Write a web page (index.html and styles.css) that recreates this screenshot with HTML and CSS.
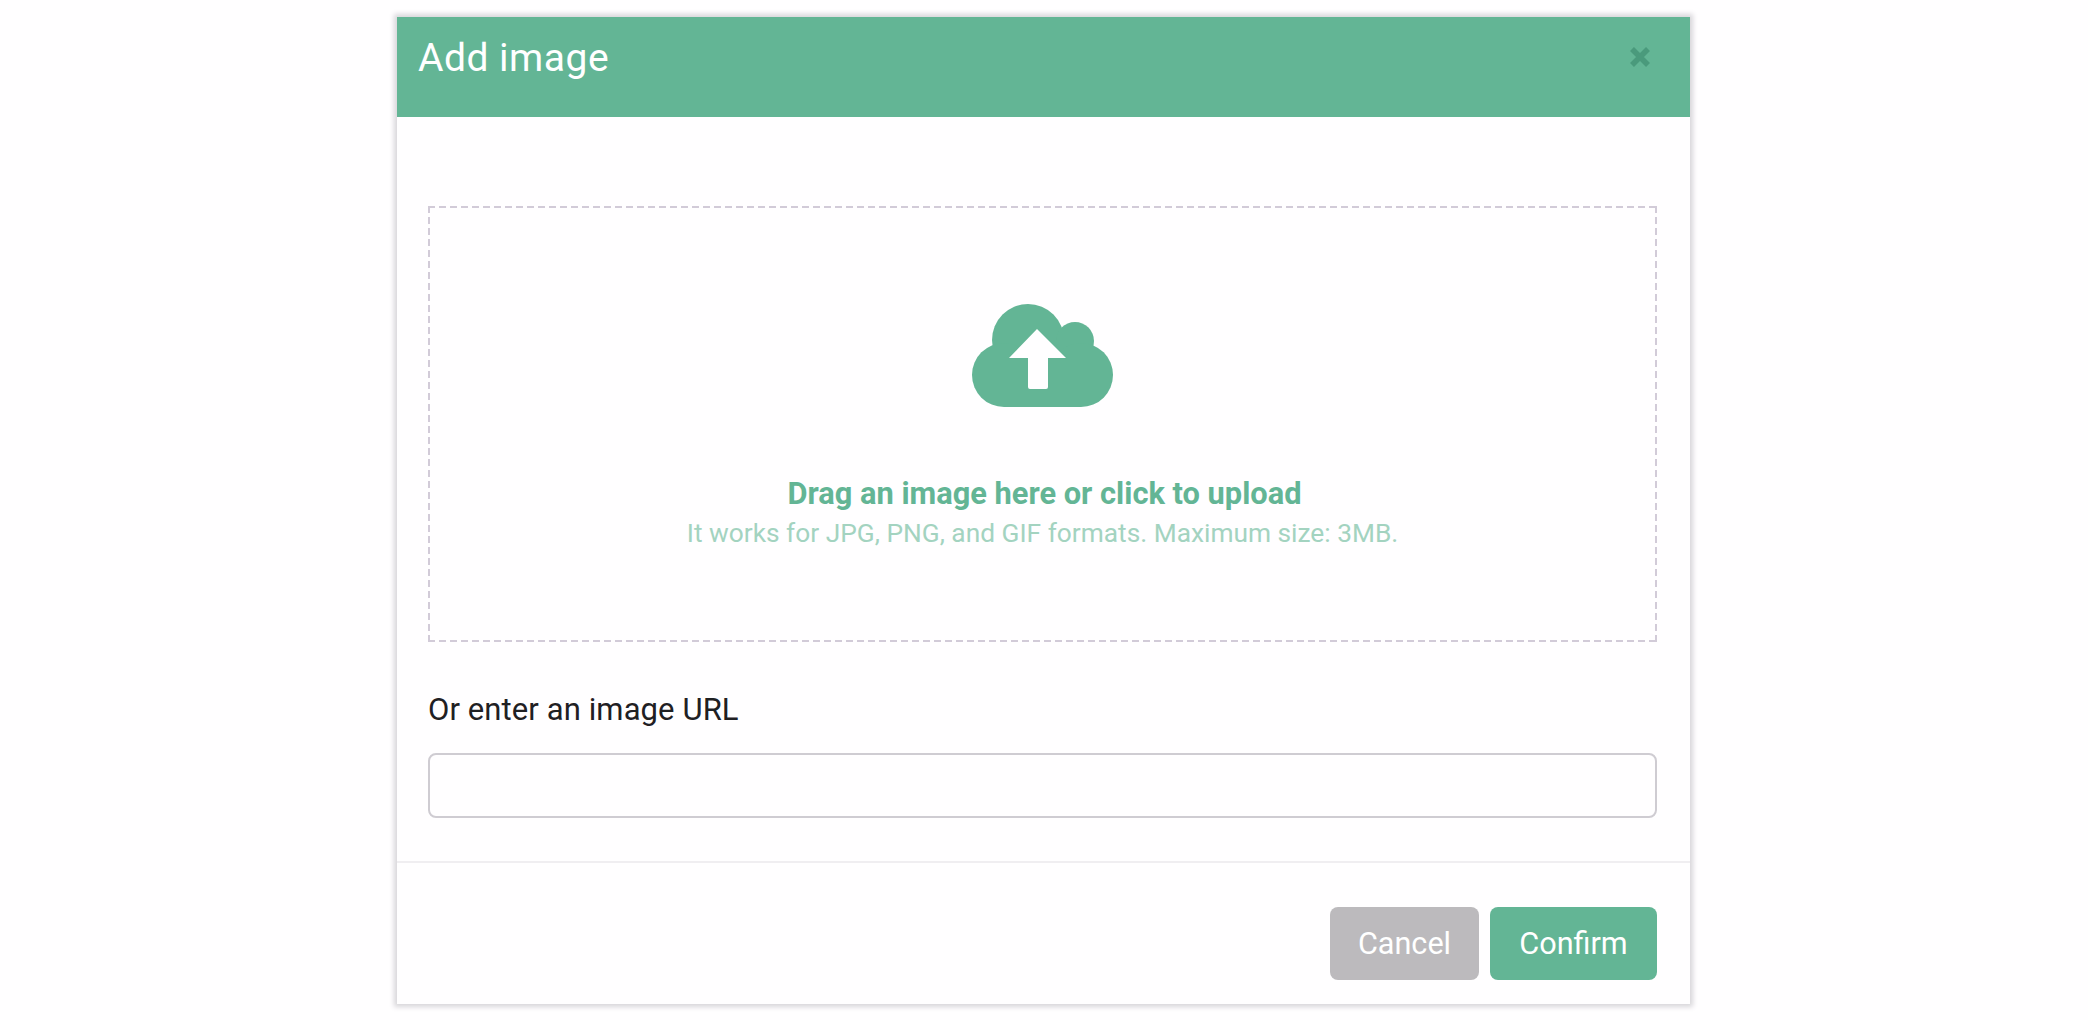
FILE: index.html
```html
<!DOCTYPE html>
<html lang="en">
<head>
  <meta charset="UTF-8" />
  <title>Add image</title>
  <link rel="stylesheet" href="styles.css">
</head>
<body>

  <div class="modal">
    <header class="modal-header">
      <h1>Add image</h1>
      <button class="close" aria-label="Close">
        <svg width="22" height="22" viewBox="0 0 22 22"><path d="M3 3 L19 19 M19 3 L3 19" /></svg>
      </button>
    </header>

    <section class="modal-body">
      <div class="dropzone">
        <svg class="cloud" width="141" height="103" viewBox="22 24 141 103">
          <circle cx="78" cy="60" r="36" />
          <circle cx="125" cy="61" r="19" />
          <circle cx="54" cy="95" r="32" />
          <circle cx="131" cy="95" r="32" />
          <rect x="54" y="70" width="77" height="57" />
          <path class="arrow" d="M87 49 L116 78 L98 78 L98 107 Q98 109 96 109 L80 109 Q78 109 78 107 L78 78 L59 78 Z" />
        </svg>
        <p class="drop-title">Drag an image here or click to upload</p>
        <p class="drop-hint">It works for JPG, PNG, and GIF formats. Maximum size: 3MB.</p>
      </div>

      <label class="url-label" for="url">Or enter an image URL</label>
      <input class="url-input" id="url" type="text">
    </section>

    <footer class="modal-footer">
      <button class="btn btn-cancel">Cancel</button>
      <button class="btn btn-confirm">Confirm</button>
    </footer>
  </div>

</body>
</html>
```

FILE: styles.css
```css
* {
  margin: 0; padding: 0; box-sizing: border-box;
  font-family: Roboto, sans-serif;
}

body {
  background: #fffeff;
  min-height: 100vh;
  padding: 17px 0 0 397px;
}

.modal {
  width: 1293px;
  height: 987px;
  background: #fffeff;
  box-shadow: 0 0 5px 3px #d8d6da;
  display: flex;
  flex-direction: column;
}

.modal-header {
  height: 100px;
  background: #63b595;
  padding: 0 21px;
  display: flex;
  align-items: center;
  justify-content: space-between;
}

.modal-header h1 {
  font-size: 39px;
  font-weight: 400;
  letter-spacing: 0.5px;
  color: #fff;
  margin-top: -18px;
}

.close {
  background: none;
  border: none;
  width: 22px;
  height: 22px;
  margin: -21px 18px 0 0;
}

.close path {
  stroke: #4a9a7c;
  stroke-width: 5.5;
  fill: none;
}

.modal-body {
  padding: 89px 33px 0 31px;
  height: 746px;
  border-bottom: 2px solid #f0eef1;
}

.dropzone {
  height: 436px;
  padding-top: 98px;
  display: flex;
  flex-direction: column;
  align-items: center;
  /* the browser's own dashes are too short here */
  background:
    repeating-linear-gradient(90deg, #d2cbd8 0 7px, transparent 7px 11px) top / 100% 2px no-repeat,
    repeating-linear-gradient(90deg, #d2cbd8 0 7px, transparent 7px 11px) bottom / 100% 2px no-repeat,
    repeating-linear-gradient(0deg, #d2cbd8 0 7px, transparent 7px 11px) left / 2px 100% no-repeat,
    repeating-linear-gradient(0deg, #d2cbd8 0 7px, transparent 7px 11px) right / 2px 100% no-repeat;
}

.cloud {
  fill: #63b595;
  margin-bottom: 70px;
}

.cloud .arrow {
  fill: #fffeff;
}

.drop-title {
  font-size: 30.8px;
  font-weight: 700;
  color: #63b595;
  line-height: 34px;
  margin-left: 4px;
}

.drop-hint {
  font-size: 26.3px;
  color: #a3d3c0;
  line-height: 38px;
  margin-top: 3px;
}

.url-label {
  display: block;
  margin-top: 49px;
  font-size: 31px;
  line-height: 38px;
  letter-spacing: 0.1px;
  color: #1f2023;
}

.url-input {
  display: block;
  width: 100%;
  height: 65px;
  margin-top: 24px;
  border: 2px solid #cfccd2;
  border-radius: 8px;
  background: #fffeff;
}

.modal-footer {
  flex: 1;
  padding: 44px 33px 0 0;
  display: flex;
  justify-content: flex-end;
  align-items: flex-start;
  gap: 11px;
}

.btn {
  height: 73px;
  border: none;
  border-radius: 8px;
  color: #fff;
  font-size: 30.6px;
}

.btn-cancel {
  width: 149px;
  background: #bcbabd;
}

.btn-confirm {
  width: 167px;
  background: #63b595;
}
```
